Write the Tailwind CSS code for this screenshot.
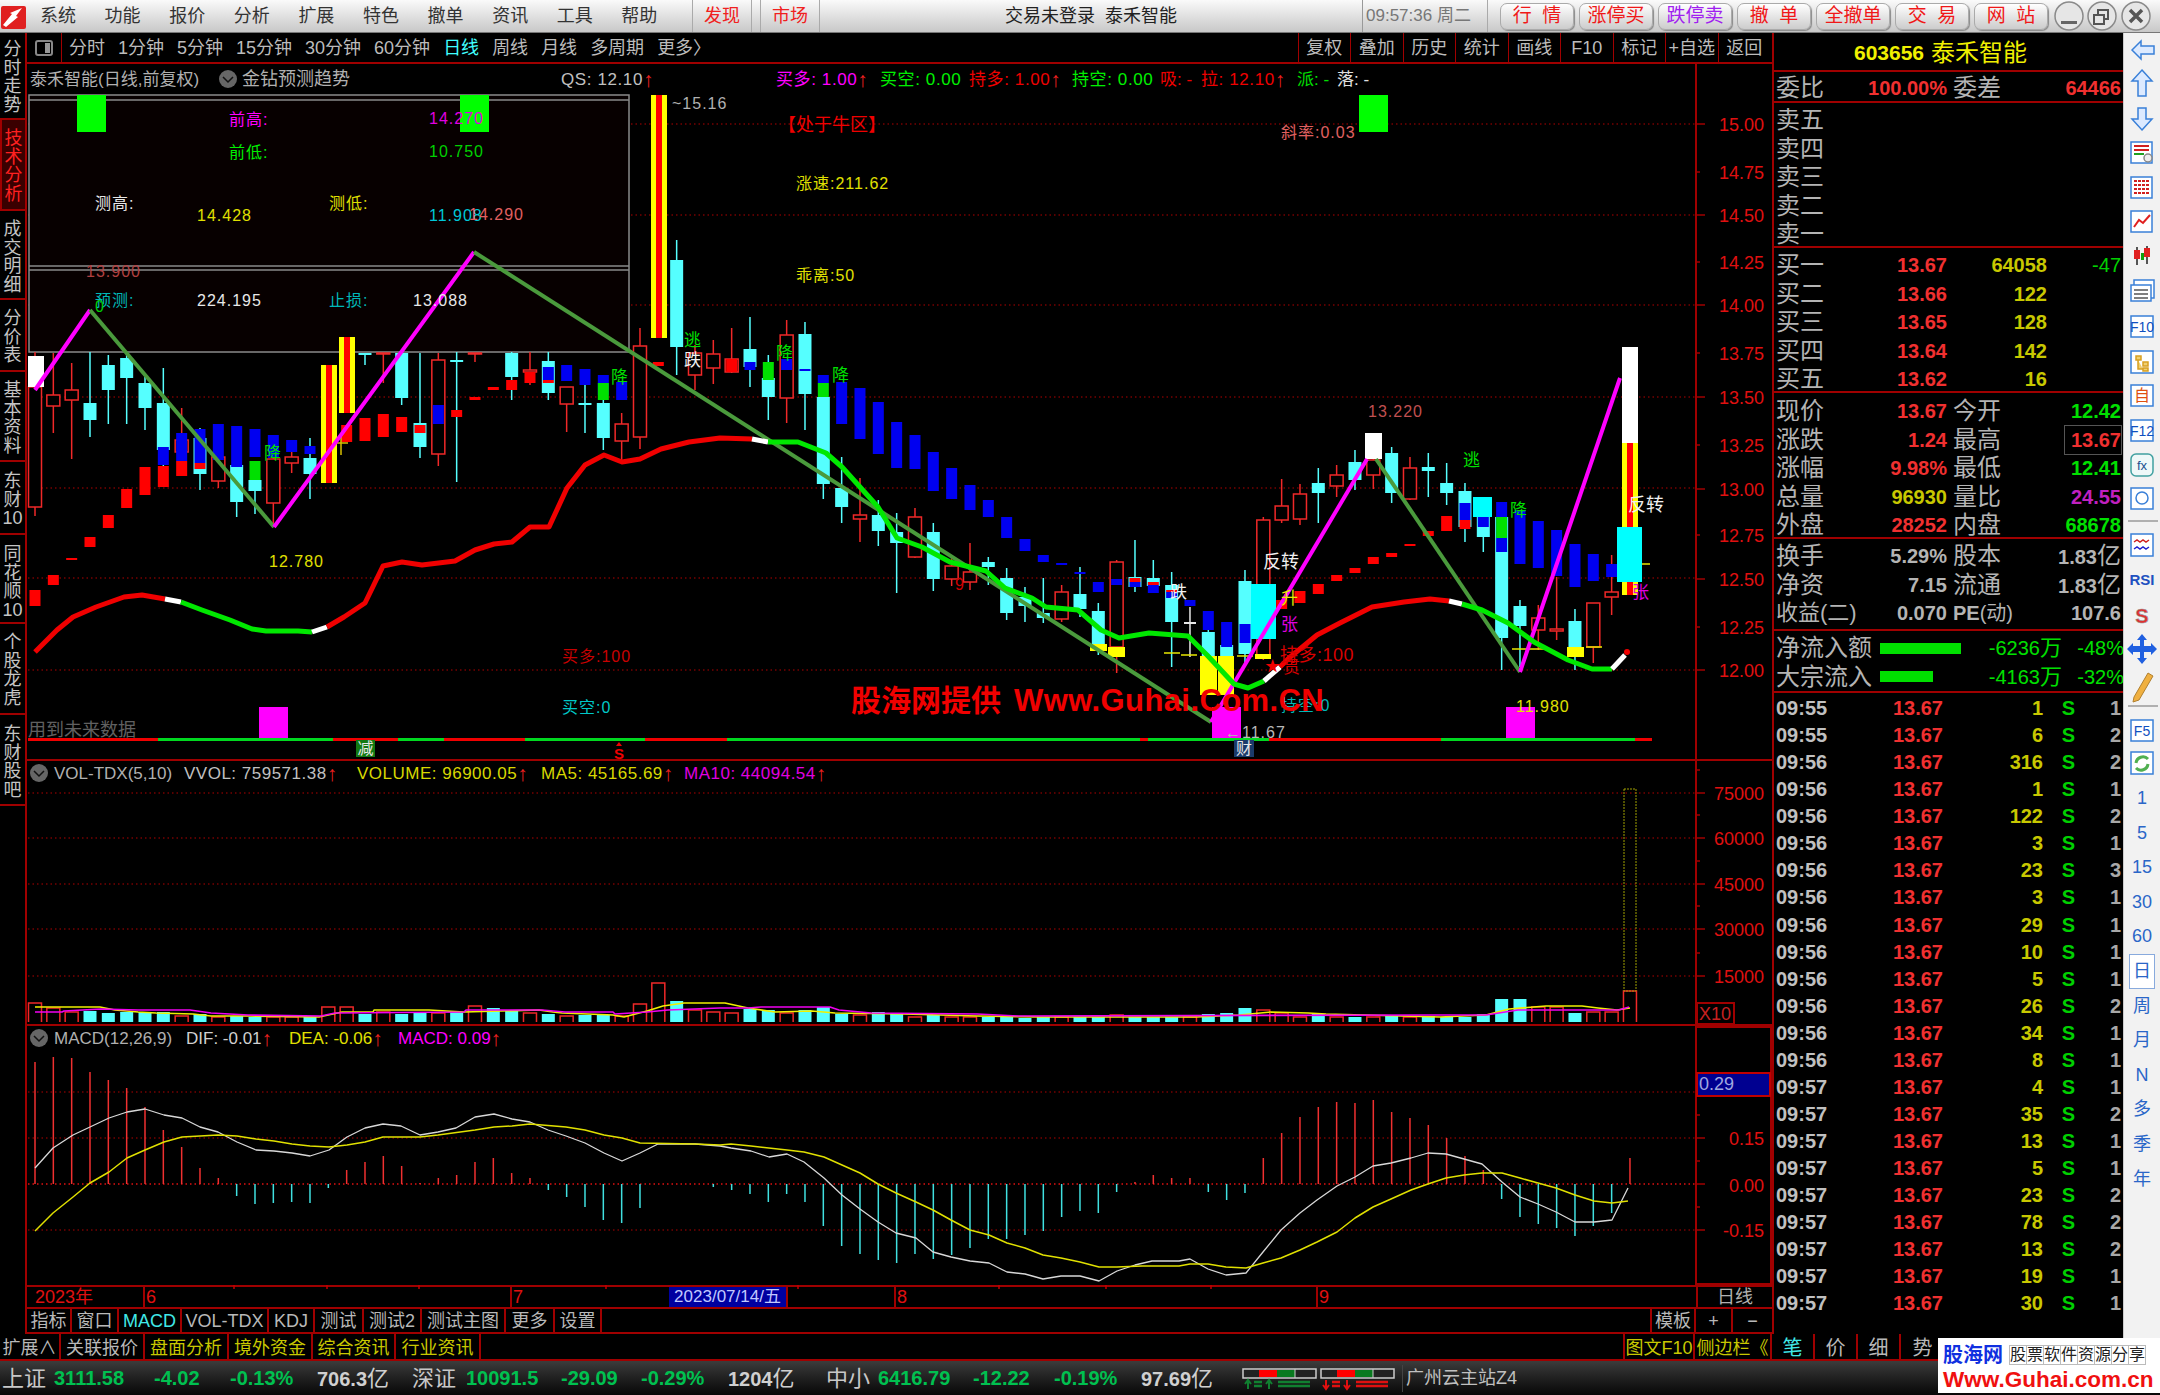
<!DOCTYPE html>
<html lang="zh"><head><meta charset="utf-8"><title>泰禾智能</title>
<script src="https://cdn.jsdelivr.net/npm/@tailwindcss/browser@4"></script></head>
<body class="relative w-[2160px] h-[1395px] overflow-hidden bg-black text-[#c0c0c0] font-['Liberation_Sans','Noto_Sans_CJK_SC',sans-serif] flex flex-col">

<!-- title bar -->
<header class="h-[33px] shrink-0 flex items-center bg-linear-to-b from-[#fafafa] to-[#c8c8c8] border-b border-[#777] text-[18px] text-[#333]">
  <svg class="w-[27px] h-[27px] shrink-0" viewBox="0 0 27 27"><rect x="1" y="3" width="25" height="23" rx="2" fill="#e02020"/><path d="M3 22 L12 11 L10 10 L22 5 L16 13 L18 14 L6 24Z" fill="#fff"/></svg>
  <nav class="w-[666px] pl-[13px] flex gap-[28.6px] border-r border-[#aaa] h-full items-center shrink-0"><span>系统</span><span>功能</span><span>报价</span><span>分析</span><span>扩展</span><span>特色</span><span>撤单</span><span>资讯</span><span>工具</span><span>帮助</span></nav>
  <div class="w-[59px] h-full flex items-center justify-center border-r border-[#aaa] text-[#f02020] shrink-0">发现</div>
  <div class="w-[9px] h-full border-r border-[#aaa] shrink-0"></div>
  <div class="w-[59px] h-full flex items-center justify-center border-r border-[#aaa] text-[#f02020] shrink-0">市场</div>
  <div class="w-[543px] h-full flex items-center justify-center border-r border-[#999] text-[#222] shrink-0">交易未登录&nbsp;&nbsp;泰禾智能</div>
  <div class="w-[125px] h-full flex items-center pl-[3px] text-[#777] text-[17px] border-r border-[#aaa] shrink-0">09:57:36 周二</div>
  <div class="pl-[12px] flex gap-[5px] shrink-0 text-[#f01818] text-[19px]">
    <span class="w-[74px] h-[27px] rounded-[7px] border border-[#aaa] shadow-[1px_1px_1px_#888] bg-linear-to-b from-white to-[#ccc] flex items-center justify-center">行&nbsp;&nbsp;情</span>
    <span class="w-[74px] h-[27px] rounded-[7px] border border-[#aaa] shadow-[1px_1px_1px_#888] bg-linear-to-b from-white to-[#ccc] flex items-center justify-center">涨停买</span>
    <span class="w-[74px] h-[27px] rounded-[7px] border border-[#aaa] shadow-[1px_1px_1px_#888] bg-linear-to-b from-white to-[#ccc] flex items-center justify-center text-[#a020f0]">跌停卖</span>
    <span class="w-[74px] h-[27px] rounded-[7px] border border-[#aaa] shadow-[1px_1px_1px_#888] bg-linear-to-b from-white to-[#ccc] flex items-center justify-center">撤&nbsp;&nbsp;单</span>
    <span class="w-[74px] h-[27px] rounded-[7px] border border-[#aaa] shadow-[1px_1px_1px_#888] bg-linear-to-b from-white to-[#ccc] flex items-center justify-center">全撤单</span>
    <span class="w-[74px] h-[27px] rounded-[7px] border border-[#aaa] shadow-[1px_1px_1px_#888] bg-linear-to-b from-white to-[#ccc] flex items-center justify-center">交&nbsp;&nbsp;易</span>
    <span class="w-[74px] h-[27px] rounded-[7px] border border-[#aaa] shadow-[1px_1px_1px_#888] bg-linear-to-b from-white to-[#ccc] flex items-center justify-center">网&nbsp;&nbsp;站</span>
  </div>
  <svg class="ml-[4px] w-[104px] h-[32px] shrink-0" viewBox="0 0 104 32">
    <g fill="#e6e6e6" stroke="#8a8a8a" stroke-width="1.5"><circle cx="17" cy="16" r="14"/><circle cx="50" cy="16" r="14"/><circle cx="84" cy="16" r="14"/></g>
    <rect x="9" y="21" width="16" height="3" fill="#666"/>
    <g fill="none" stroke="#555" stroke-width="2"><rect x="46" y="10" width="10" height="9"/><rect x="42" y="15" width="10" height="9" fill="#e6e6e6"/></g>
    <path d="M78 10 L90 22 M90 10 L78 22" stroke="#555" stroke-width="3.5"/>
  </svg>
</header>

<div class="flex h-[1328px] shrink-0">
  <div class="w-[2123px] flex flex-col shrink-0">
    <div class="flex h-[1301px]">
      <!-- left vertical tabs -->
      <aside class="w-[27px] shrink-0 border-r-2 border-[#a00000] flex flex-col text-[18px] leading-[18.5px] text-center text-[#c4c4c4]">
        <div class="h-[87px] border-b-2 border-[#a00000] pt-[7px] break-all">分时走势</div>
        <div class="h-[91px] border-b-2 border-[#a00000] pt-[9px] break-all bg-[#3a0000] text-[#ff2020] border-l-2">技术分析</div>
        <div class="h-[89px] border-b-2 border-[#a00000] pt-[9px] break-all">成交明细</div>
        <div class="h-[72px] border-b-2 border-[#a00000] pt-[9px] break-all">分价表</div>
        <div class="h-[90px] border-b-2 border-[#a00000] pt-[9px] break-all">基本资料</div>
        <div class="h-[73px] border-b-2 border-[#a00000] pt-[10px] break-all">东财10</div>
        <div class="h-[89px] border-b-2 border-[#a00000] pt-[10px] break-all">同花顺10</div>
        <div class="h-[91px] border-b-2 border-[#a00000] pt-[9px] break-all">个股龙虎</div>
        <div class="h-[91px] border-b-2 border-[#a00000] pt-[10px] break-all">东财股吧</div>
        <div class="flex-1"></div>
      </aside>

      <!-- centre -->
      <main class="w-[1745px] shrink-0 flex flex-col">
        <div class="h-[31px] shrink-0 flex items-center border-b-2 border-[#a00000] text-[18px] text-[#bcbcbc]">
          <div class="w-[35px] h-full border-r border-[#a00000] flex items-center justify-center shrink-0"><svg class="w-[18px] h-[16px]" viewBox="0 0 18 16"><rect x="1" y="1" width="16" height="14" rx="2" fill="none" stroke="#888" stroke-width="2"/><rect x="10" y="3" width="5" height="10" fill="#999"/></svg></div>
          <div class="pl-[7px] pt-[2px] flex gap-[13px] shrink-0 whitespace-nowrap"><span>分时</span><span>1分钟</span><span>5分钟</span><span>15分钟</span><span>30分钟</span><span>60分钟</span><span class="text-[#40ffff]">日线</span><span>周线</span><span>月线</span><span>多周期</span><span>更多〉</span></div>
          <div class="ml-auto pr-[2px] flex h-full shrink-0 whitespace-nowrap">
            <span class="w-[52.5px] pt-[2px] flex items-center justify-center border-l border-[#a00000]">复权</span><span class="w-[52.5px] pt-[2px] flex items-center justify-center border-l border-[#a00000]">叠加</span><span class="w-[52.5px] pt-[2px] flex items-center justify-center border-l border-[#a00000]">历史</span><span class="w-[52.5px] pt-[2px] flex items-center justify-center border-l border-[#a00000]">统计</span><span class="w-[52.5px] pt-[2px] flex items-center justify-center border-l border-[#a00000]">画线</span><span class="w-[52.5px] pt-[2px] flex items-center justify-center border-l border-[#a00000]">F10</span><span class="w-[52.5px] pt-[2px] flex items-center justify-center border-l border-[#a00000]">标记</span><span class="w-[52.5px] pt-[2px] flex items-center justify-center border-l border-[#a00000]">+自选</span><span class="w-[52.5px] pt-[2px] flex items-center justify-center border-l border-[#a00000]">返回</span>
          </div>
        </div>

        <div class="h-[1221px] shrink-0 relative">
          <svg class="absolute inset-0 w-[1745px] h-[1221px] overflow-visible" viewBox="27 64 1745 1221">
            <g id="chart"></g>
            <!-- pane headers -->
            <g font-size="17" dominant-baseline="central">
              <text x="30" y="79" fill="#b0b0b0">泰禾智能(日线,前复权)</text>
              <circle cx="228" cy="79" r="9" fill="#666"/><path d="M223 77 L228 82 L233 77" stroke="#111" stroke-width="1.5" fill="none"/>
              <text x="242" y="79" fill="#b0b0b0" font-size="18">金钻预测趋势</text>
              <text x="561" y="79" fill="#c0c0c0" letter-spacing="0.6">QS: 12.10<tspan fill="#f02020" font-size="21">↑</tspan></text>
              <text x="776" y="79" fill="#ff00ff" letter-spacing="0.6">买多: 1.00<tspan fill="#f02020" font-size="21">↑</tspan></text>
              <text x="880" y="79" fill="#00f000" letter-spacing="0.6">买空: 0.00</text>
              <text x="969" y="79" fill="#f00000" letter-spacing="0.6">持多: 1.00<tspan fill="#f02020" font-size="21">↑</tspan></text>
              <text x="1072" y="79" fill="#00f000" letter-spacing="0.6">持空: 0.00</text>
              <text x="1160" y="79" fill="#f00000">吸: -</text>
              <text x="1201" y="79" fill="#f00000" letter-spacing="0.6">拉: 12.10<tspan fill="#f02020" font-size="21">↑</tspan></text>
              <text x="1297" y="79" fill="#00e000">派: -</text>
              <text x="1337" y="79" fill="#e0e0e0">落: -</text>
              <circle cx="39" cy="773" r="9" fill="#666"/><path d="M34 771 L39 776 L44 771" stroke="#111" stroke-width="1.5" fill="none"/>
              <text x="54" y="773" fill="#b0b0b0">VOL-TDX(5,10)</text>
              <text x="184" y="773" fill="#c0c0c0" letter-spacing="0.5">VVOL: 759571.38<tspan fill="#f02020" font-size="21">↑</tspan></text>
              <text x="357" y="773" fill="#d8d800" letter-spacing="0.5">VOLUME: 96900.05<tspan fill="#f02020" font-size="21">↑</tspan></text>
              <text x="541" y="773" fill="#d8d800" letter-spacing="0.5">MA5: 45165.69<tspan fill="#f02020" font-size="21">↑</tspan></text>
              <text x="684" y="773" fill="#e000e0" letter-spacing="0.5">MA10: 44094.54<tspan fill="#f02020" font-size="21">↑</tspan></text>
              <circle cx="39" cy="1038" r="9" fill="#666"/><path d="M34 1036 L39 1041 L44 1036" stroke="#111" stroke-width="1.5" fill="none"/>
              <text x="54" y="1038" fill="#b0b0b0">MACD(12,26,9)</text>
              <text x="186" y="1038" fill="#d0d0d0">DIF: -0.01<tspan fill="#f02020" font-size="21">↑</tspan></text>
              <text x="289" y="1038" fill="#e0e000">DEA: -0.06<tspan fill="#f02020" font-size="21">↑</tspan></text>
              <text x="398" y="1038" fill="#ff00ff">MACD: 0.09<tspan fill="#f02020" font-size="21">↑</tspan></text>
            </g>
            <!-- info box -->
            <g font-size="16" dominant-baseline="central" letter-spacing="1">
              <text x="229" y="119" fill="#ff00ff">前高:</text><text x="429" y="118" fill="#e000e0">14.270</text>
              <text x="229" y="152" fill="#00f000">前低:</text><text x="429" y="151" fill="#00d000">10.750</text>
              <text x="95" y="203" fill="#e8e8e8">测高:</text><text x="197" y="215" fill="#e0e000">14.428</text>
              <text x="329" y="203" fill="#e0e000">测低:</text><text x="429" y="215" fill="#00c8d8">11.908</text><text x="469" y="214" fill="#e06060">14.290</text>
              <text x="86" y="271" fill="#b04040">13.900</text>
              <text x="95" y="300" fill="#00b8b8">预测:</text><text x="197" y="300" fill="#e8e8e8">224.195</text>
              <text x="329" y="300" fill="#00b8b8">止损:</text><text x="413" y="300" fill="#e8e8e8">13.088</text>
            </g>
            <!-- chart marks -->
            <g font-size="16" dominant-baseline="central" letter-spacing="1">
              <text x="672" y="103" fill="#b0b0b0">~15.16</text>
              <text x="778" y="125" fill="#f00000" letter-spacing="0" font-size="18">【处于牛区】</text>
              <text x="796" y="183" fill="#e0e000">涨速:211.62</text>
              <text x="796" y="275" fill="#e0e000">乖离:50</text>
              <text x="1281" y="132" fill="#e06060">斜率:0.03</text>
              <text x="1368" y="411" fill="#c05050">13.220</text>
              <text x="269" y="561" fill="#e0e000">12.780</text>
              <text x="562" y="656" fill="#c80000">买多:100</text>
              <text x="562" y="707" fill="#00c8c8">买空:0</text>
              <text x="28" y="730" fill="#606060" letter-spacing="0" font-size="18">用到未来数据</text>
              <text x="1281" y="705" fill="#00b8b8">持空:0</text>
              <text x="1225" y="732" fill="#b8b8b8">←11.67</text>
              <text x="1516" y="706" fill="#e0e000">11.980</text>
              <text x="955" y="584" fill="#d00000">9</text>
              <text x="95" y="306" fill="#00d000">0</text>
              <text x="1463" y="460" fill="#00e000" font-size="17">逃</text><text x="684" y="340" fill="#00e000" font-size="17">逃</text>
              <text x="684" y="360" fill="#f0f0f0" font-size="17">跌</text><text x="1170" y="592" fill="#f0f0f0" font-size="17">跌</text>
              <text x="264" y="453" fill="#00e000" font-size="17">降</text><text x="611" y="377" fill="#00e000" font-size="17">降</text><text x="776" y="353" fill="#00e000" font-size="17">降</text><text x="832" y="375" fill="#00e000" font-size="17">降</text><text x="1510" y="510" fill="#00e000" font-size="17">降</text>
              <text x="1263" y="562" fill="#f0f0f0" font-size="18" letter-spacing="0">反转</text><text x="1628" y="505" fill="#f0f0f0" font-size="18" letter-spacing="0">反转</text>
              <text x="1281" y="598" fill="#e8e800" font-size="17">升</text><text x="1281" y="624" fill="#e000e0" font-size="17">张</text><text x="1632" y="592" fill="#e000e0" font-size="17">张</text>
              <text x="1265" y="665" fill="#f00000" letter-spacing="0" font-size="15">★</text>
              <text x="1280" y="655" fill="#d80000" font-size="18" letter-spacing="0.5">持多:100</text>
              <text x="1283" y="667" fill="#d80000" font-size="17">贯</text>
              <text x="851" y="700" fill="#f00000" font-size="30" font-weight="700" letter-spacing="0">股海网提供</text>
              <text x="1014" y="700" fill="#f00000" font-size="31" font-weight="700" letter-spacing="0.4">Www.Guhai.Com.CN</text>
              <rect x="356" y="740" width="19" height="17" fill="#127a12"/><text x="357.500" y="748.500" fill="#e8e8e8" font-size="16" letter-spacing="0">减</text>
              <rect x="1234" y="740" width="20" height="17" fill="#1a3a6a"/><text x="1236" y="748.500" fill="#e8e8e8" font-size="16" letter-spacing="0">财</text>
              <text x="614" y="753" fill="#f00000" font-size="15" font-weight="700">S</text><path d="M619 742 l3 4 h-6z" fill="#f00000"/>
            </g>
            <!-- axes -->
            <g font-size="18" fill="#e01010" text-anchor="end" dominant-baseline="central" transform="translate(0,1)">
              <text x="1764" y="124">15.00</text><text x="1764" y="172">14.75</text><text x="1764" y="215">14.50</text><text x="1764" y="262">14.25</text><text x="1764" y="305">14.00</text><text x="1764" y="353">13.75</text><text x="1764" y="397">13.50</text><text x="1764" y="445">13.25</text><text x="1764" y="489">13.00</text><text x="1764" y="535">12.75</text><text x="1764" y="579">12.50</text><text x="1764" y="627">12.25</text><text x="1764" y="670">12.00</text>
              <text x="1764" y="793">75000</text><text x="1764" y="838">60000</text><text x="1764" y="884">45000</text><text x="1764" y="929">30000</text><text x="1764" y="976">15000</text>
              <text x="1764" y="1138">0.15</text><text x="1764" y="1185">0.00</text><text x="1764" y="1230">-0.15</text>
              <rect x="1697" y="1002" width="37" height="21" fill="#000" stroke="#a00000" stroke-width="2"/>
              <text x="1731" y="1013" fill="#c82020">X10</text>
              <rect x="1697" y="1072" width="73" height="23" fill="#000090" stroke="#c00000" stroke-width="2"/>
              <text x="1699" y="1083" text-anchor="start" fill="#a0a8e0">0.29</text>
            </g>
          </svg>
        </div>

        <div class="h-[24px] shrink-0 flex border-y-2 border-[#a00000] text-[18px] leading-[20px] text-[#e01010]">
          <span class="w-[116px] pl-[8px] shrink-0">2023年</span>
          <span class="w-[367px] pl-[1px] border-l-2 border-[#a00000] shrink-0">6</span>
          <span class="w-[159px] pl-[1px] border-l-2 border-[#a00000] shrink-0">7</span>
          <span class="w-[117px] bg-[#0000a0] text-[#c0c8ff] text-[17px] text-center whitespace-nowrap shrink-0">2023/07/14/五</span>
          <span class="w-[108px] border-l-2 border-[#a00000] shrink-0"></span>
          <span class="w-[422px] pl-[1px] border-l-2 border-[#a00000] shrink-0">8</span>
          <span class="w-[380px] pl-[1px] border-l-2 border-[#a00000] shrink-0">9</span>
          <span class="flex-1 border-l-2 border-[#a00000] text-[#b0b0b0] text-center">日线</span>
        </div>
        <div class="h-[25px] shrink-0 flex items-stretch border-b-2 border-[#a00000] text-[18px] leading-[25px] text-[#b8b8b8] text-center">
          <span class="w-[45px] border-r-2 border-[#a00000]">指标</span><span class="w-[47px] border-r-2 border-[#a00000]">窗口</span><span class="w-[63px] border-r-2 border-[#a00000] text-[#40e8e8]">MACD</span><span class="w-[87px] border-r-2 border-[#a00000]">VOL-TDX</span><span class="w-[46px] border-r-2 border-[#a00000]">KDJ</span><span class="w-[49px] border-r-2 border-[#a00000]">测试</span><span class="w-[58px] border-r-2 border-[#a00000]">测试2</span><span class="w-[84px] border-r-2 border-[#a00000]">测试主图</span><span class="w-[49px] border-r-2 border-[#a00000]">更多</span><span class="w-[47px] border-r-2 border-[#a00000]">设置</span>
          <span class="ml-auto w-[46px] border-x-2 border-[#a00000]">模板</span><span class="w-[37px] border-r-2 border-[#a00000]">+</span><span class="w-[39px]">−</span>
        </div>
      </main>

      <!-- right quote panel -->
      <section class="w-[351px] shrink-0 border-l-2 border-[#a00000] flex flex-col pl-[2px] text-[24px] leading-[28.6px] text-[#b4b4b4]">
        <div class="h-[39px] shrink-0 -ml-[2px] pt-[3px] border-b-2 border-[#a00000] flex items-center justify-center gap-[7px] text-[#f0f000] pr-[16px]"><b class="text-[21px]">603656</b><span>泰禾智能</span></div>
        <div class="h-[31px] shrink-0 -ml-[2px] pl-[2px] pt-[2px] border-b-2 border-[#a00000] grid grid-cols-[50px_121px_66px_108px] items-center">
          <span>委比</span><b class="text-right text-[20px] text-[#f03030]">100.00%</b><span class="pl-[6px]">委差</span><b class="text-right text-[20px] text-[#f03030]">64466</b>
        </div>
        <div class="h-[145px] shrink-0 -ml-[2px] pl-[2px] border-b-2 border-[#a00000] pt-[3px]">卖五<br>卖四<br>卖三<br>卖二<br>卖一</div>
        <div class="h-[145px] shrink-0 -ml-[2px] pl-[2px] border-b-2 border-[#a00000] pt-[3px] flex">
          <div class="w-[50px]">买一<br>买二<br>买三<br>买四<br>买五</div>
          <b class="w-[121px] text-right text-[20px] text-[#f03030]">13.67<br>13.66<br>13.65<br>13.64<br>13.62</b>
          <b class="w-[100px] text-right text-[20px] text-[#c8c800]">64058<br>122<br>128<br>142<br>16</b>
          <span class="w-[74px] text-right text-[20px] text-[#00d000]">-47</span>
        </div>
        <div class="h-[146px] shrink-0 -ml-[2px] pl-[2px] border-b-2 border-[#a00000] pt-[4px] grid grid-cols-[50px_121px_66px_108px] auto-rows-[28.6px]">
          <span>现价</span><b class="text-right text-[20px] text-[#f03030]">13.67</b><span class="pl-[6px]">今开</span><b class="text-right text-[20px] text-[#00e000]">12.42</b>
          <span>涨跌</span><b class="text-right text-[20px] text-[#f03030]">1.24</b><span class="pl-[6px]">最高</span><b class="text-right text-[20px] text-[#f03030] justify-self-end w-[56px] outline outline-[#555]">13.67</b>
          <span>涨幅</span><b class="text-right text-[20px] text-[#f03030]">9.98%</b><span class="pl-[6px]">最低</span><b class="text-right text-[20px] text-[#00e000]">12.41</b>
          <span>总量</span><b class="text-right text-[20px] text-[#c8c800]">96930</b><span class="pl-[6px]">量比</span><b class="text-right text-[20px] text-[#c020c0]">24.55</b>
          <span>外盘</span><b class="text-right text-[20px] text-[#f03030]">28252</b><span class="pl-[6px]">内盘</span><b class="text-right text-[20px] text-[#00e000]">68678</b>
        </div>
        <div class="h-[92px] shrink-0 -ml-[2px] pl-[2px] border-b-2 border-[#a00000] pt-[3px] grid grid-cols-[50px_121px_66px_108px] auto-rows-[28.6px]">
          <span>换手</span><b class="text-right text-[20px] text-[#b4b4b4]">5.29%</b><span class="pl-[6px]">股本</span><b class="text-right text-[20px] text-[#b4b4b4] whitespace-nowrap">1.83<span class="font-normal text-[24px]">亿</span></b>
          <span>净资</span><b class="text-right text-[20px] text-[#b4b4b4]">7.15</b><span class="pl-[6px]">流通</span><b class="text-right text-[20px] text-[#b4b4b4] whitespace-nowrap">1.83<span class="font-normal text-[24px]">亿</span></b>
          <span class="text-[22px] whitespace-nowrap">收益(二)</span><b class="text-right text-[20px] text-[#b4b4b4]">0.070</b><b class="text-[20px] pl-[6px] whitespace-nowrap text-[#b4b4b4]">PE<span class="font-normal">(动)</span></b><b class="text-right text-[20px] text-[#b4b4b4]">107.6</b>
        </div>
        <div class="h-[62px] shrink-0 -ml-[2px] pl-[2px] border-b-2 border-[#a00000] pt-[3px] grid grid-cols-[104px_81px_101px_62px] auto-rows-[28.6px] items-center">
          <span>净流入额</span><span class="h-[11px] bg-[#00e000]"></span><span class="text-right text-[20px] text-[#00e000]">-6236<span class="text-[22px]">万</span></span><span class="text-right text-[20px] text-[#00e000]">-48%</span>
          <span>大宗流入</span><span class="h-[11px] w-[53px] bg-[#00e000]"></span><span class="text-right text-[20px] text-[#00e000]">-4163<span class="text-[22px]">万</span></span><span class="text-right text-[20px] text-[#00e000]">-32%</span>
        </div>
        <div class="flex-1 flex text-[20px] leading-[27.07px] font-bold pt-[2px]">
          <div class="w-[53px] text-[#c0c0c0]">09:55<br>09:55<br>09:56<br>09:56<br>09:56<br>09:56<br>09:56<br>09:56<br>09:56<br>09:56<br>09:56<br>09:56<br>09:56<br>09:56<br>09:57<br>09:57<br>09:57<br>09:57<br>09:57<br>09:57<br>09:57<br>09:57<br>09:57</div>
          <div class="w-[114px] text-right text-[#f03030]">13.67<br>13.67<br>13.67<br>13.67<br>13.67<br>13.67<br>13.67<br>13.67<br>13.67<br>13.67<br>13.67<br>13.67<br>13.67<br>13.67<br>13.67<br>13.67<br>13.67<br>13.67<br>13.67<br>13.67<br>13.67<br>13.67<br>13.67</div>
          <div class="w-[100px] text-right text-[#c8c800]">1<br>6<br>316<br>1<br>122<br>3<br>23<br>3<br>29<br>10<br>5<br>26<br>34<br>8<br>4<br>35<br>13<br>5<br>23<br>78<br>13<br>19<br>30</div>
          <div class="w-[32px] text-right text-[#00d000]">S<br>S<br>S<br>S<br>S<br>S<br>S<br>S<br>S<br>S<br>S<br>S<br>S<br>S<br>S<br>S<br>S<br>S<br>S<br>S<br>S<br>S<br>S</div>
          <div class="w-[46px] text-right text-[#a8a8a8]">1<br>2<br>2<br>1<br>2<br>1<br>3<br>1<br>1<br>1<br>1<br>2<br>1<br>1<br>1<br>2<br>1<br>1<br>2<br>2<br>2<br>1<br>1</div>
        </div>
      </section>
    </div>

    <!-- bottom tab row -->
    <div class="h-[27px] shrink-0 flex items-stretch border-b-2 border-[#a00000] text-[18px] leading-[29px] text-center text-[#c8c800]">
      <span class="w-[61px] border-r-2 border-[#a00000] text-[#b8b8b8]">扩展∧</span><span class="w-[84px] border-r-2 border-[#a00000] text-[#b8b8b8]">关联报价</span><span class="w-[84px] border-r-2 border-[#a00000]">盘面分析</span><span class="w-[84px] border-r-2 border-[#a00000]">境外资金</span><span class="w-[83px] border-r-2 border-[#a00000]">综合资讯</span><span class="w-[85px] border-r-2 border-[#a00000]">行业资讯</span>
      <span class="ml-[1142px] w-[72px] border-x-2 border-[#a00000] whitespace-nowrap">图文F10</span><span class="w-[77px] border-r-2 border-[#a00000] whitespace-nowrap">侧边栏《</span>
      <span class="w-[43px] border-r-2 border-[#a00000] text-[#40e8e8] text-[20px]">笔</span><span class="w-[43px] border-r-2 border-[#a00000] text-[#b8b8b8] text-[20px]">价</span><span class="w-[43px] border-r-2 border-[#a00000] text-[#b8b8b8] text-[20px]">细</span><span class="w-[43px] text-[#b8b8b8] text-[20px]">势</span>
    </div>
  </div>

  <!-- right icon strip -->
  <aside class="w-[37px] shrink-0 bg-[#f2f2f2] border-l border-[#ccc] flex flex-col text-[#2a66c8] text-[18px] text-center">
    <svg class="w-[37px] h-[748px] shrink-0" viewBox="0 33 37 748" fill="none" stroke="#3a80d8" stroke-width="1.5">
      <path d="M8 50 L17 41 V46 H30 V54 H17 V59Z" fill="#dceaff"/>
      <path d="M18 70 L28 81 H22 V96 H14 V81 H8Z" fill="#dceaff"/>
      <path d="M18 130 L28 119 H22 V108 H14 V119 H8Z" fill="#dceaff"/>
      <rect x="7" y="142" width="21" height="21" fill="#fff"/><path d="M10 146h15M10 150h15" stroke="#d02020" stroke-width="2"/><path d="M10 154h10" stroke="#20a020" stroke-width="2"/><circle cx="24" cy="158" r="4" stroke="#888" fill="#eee"/>
      <rect x="7" y="177" width="21" height="21" fill="#fff"/><path d="M10 181h15M10 185h15M10 189h15M10 193h15" stroke="#d02020" stroke-width="2" stroke-dasharray="3 1"/>
      <rect x="7" y="211" width="21" height="21" fill="#fff"/><path d="M10 227 L15 220 L19 223 L26 215" stroke="#e02020" stroke-width="2"/>
      <path d="M13 247v18M23 246v18" stroke="#222"/><rect x="10" y="250" width="6" height="9" fill="#e02020" stroke="none"/><rect x="20" y="248" width="6" height="9" fill="#e02020" stroke="none"/><rect x="17" y="253" width="3" height="7" fill="#10a010" stroke="none"/>
      <rect x="10" y="280" width="20" height="18" fill="#fff"/><rect x="7" y="285" width="20" height="16" fill="#fff"/><path d="M10 290h14M10 294h14M10 298h14" stroke="#555"/>
      <rect x="7" y="316" width="22" height="21" fill="#fff"/><text x="18" y="332" font-size="14" fill="#1050c0" stroke="none" text-anchor="middle">F10</text>
      <rect x="7" y="351" width="22" height="22" fill="#fff"/><path d="M12 356h5v4h-5zM19 362h5v4h-5zM19 368h5v3h-5zM14 360v9h5" stroke="#d8a020" fill="#f0d070"/>
      <rect x="7" y="385" width="22" height="21" fill="#fff"/><text x="18" y="401" font-size="16" fill="#e05010" stroke="none" text-anchor="middle">自</text>
      <rect x="7" y="420" width="22" height="21" fill="#fff"/><text x="18" y="436" font-size="14" fill="#1050c0" stroke="none" text-anchor="middle">F12</text>
      <rect x="7" y="454" width="22" height="22" rx="5" fill="#eef8f8" stroke="#40a0a0"/><text x="18" y="470" font-size="13" fill="#205090" stroke="none" text-anchor="middle">fx</text>
      <rect x="7" y="488" width="22" height="21" fill="#fff"/><circle cx="18" cy="498" r="6"/>
      <path d="M4 521h30" stroke="#b0b0b0" stroke-width="2"/>
      <rect x="7" y="534" width="22" height="22" fill="#fff"/><path d="M10 542l3-2 3 2 3-2 3 2 3-2" stroke="#d02020"/><path d="M10 549l3-2 3 2 3-2 3 2 3-2" stroke="#2020d0"/>
      <text x="18" y="585" font-size="15" font-weight="700" fill="#2050c0" stroke="none" text-anchor="middle">RSI</text>
      <text x="18" y="623" font-size="20" font-weight="700" fill="#e03030" stroke="#999" stroke-width="0.6" text-anchor="middle">S</text>
      <path d="M18 634l5 6h-3v6h7v-3l6 6-6 6v-3h-7v6h3l-5 6-5-6h3v-6H9v3l-6-6 6-6v3h7v-6h-3z" fill="#2060e0" stroke="none"/>
      <path d="M10 697 L24 673 L29 676 L15 700 L9 702Z" fill="#f0b040" stroke="#b08030" stroke-width="1"/>
      <path d="M4 706h30" stroke="#b0b0b0" stroke-width="2"/>
      <rect x="7" y="720" width="22" height="21" fill="#fff"/><text x="18" y="736" font-size="14" fill="#1050c0" stroke="none" text-anchor="middle">F5</text>
      <rect x="7" y="752" width="22" height="22" fill="#fff"/><path d="M12 763a7 7 0 0 1 12-4M24 764a7 7 0 0 1-12 4" stroke="#50b050" stroke-width="3"/>
    </svg>
    <span class="h-[34.6px] shrink-0 leading-[34.6px]">1</span><span class="h-[34.6px] shrink-0 leading-[34.6px]">5</span><span class="h-[34.6px] shrink-0 leading-[34.6px]">15</span><span class="h-[34.6px] shrink-0 leading-[34.6px]">30</span><span class="h-[34.6px] shrink-0 leading-[34.6px]">60</span>
    <span class="h-[34.6px] shrink-0 leading-[32px] mx-[5px] bg-white border border-[#88aadd]">日</span>
    <span class="h-[34.6px] shrink-0 leading-[34.6px]">周</span><span class="h-[34.6px] shrink-0 leading-[34.6px]">月</span><span class="h-[34.6px] shrink-0 leading-[34.6px]">N</span><span class="h-[34.6px] shrink-0 leading-[34.6px]">多</span><span class="h-[34.6px] shrink-0 leading-[34.6px]">季</span><span class="h-[34.6px] shrink-0 leading-[34.6px]">年</span>
  </aside>
</div>

<!-- index status bar -->
<footer class="h-[34px] shrink-0 flex items-center bg-linear-to-b from-[#3c3c3c] to-[#080808] text-[20px] font-bold text-[#00c050] whitespace-nowrap">
  <span class="w-[54px] pl-[2px] text-[22px] font-normal text-[#c8c8c8]">上证</span><span class="w-[100px]">3111.58</span><span class="w-[76px]">-4.02</span><span class="w-[87px]">-0.13%</span><span class="w-[95px] text-[#d0d0d0]">706.3<span class="font-normal text-[22px]">亿</span></span>
  <span class="w-[54px] text-[22px] font-normal text-[#c8c8c8]">深证</span><span class="w-[95px]">10091.5</span><span class="w-[80px]">-29.09</span><span class="w-[87px]">-0.29%</span><span class="w-[98px] text-[#d0d0d0]">1204<span class="font-normal text-[22px]">亿</span></span>
  <span class="w-[52px] text-[22px] font-normal text-[#c8c8c8]">中小</span><span class="w-[95px]">6416.79</span><span class="w-[81px]">-12.22</span><span class="w-[87px]">-0.19%</span><span class="w-[101px] text-[#d0d0d0]">97.69<span class="font-normal text-[22px]">亿</span></span>
  <svg class="w-[154px] h-[26px] shrink-0" viewBox="0 0 154 26">
    <rect x="1" y="4" width="73" height="9" fill="#222" stroke="#ccc" stroke-width="1.5"/><rect x="17" y="5" width="18" height="7" fill="#f00"/><rect x="35" y="5" width="18" height="7" fill="#0a7a20"/><path d="M53 4v9" stroke="#ccc"/>
    <rect x="79" y="4" width="73" height="9" fill="#222" stroke="#ccc" stroke-width="1.5"/><rect x="95" y="5" width="18" height="7" fill="#f00"/><rect x="113" y="5" width="18" height="7" fill="#0a7a20"/><path d="M131 4v9" stroke="#ccc"/>
    <path d="M6 15v9M3 19l3-4 3 4M27 15v9M24 19l3-4 3 4" stroke="#108030" stroke-width="2" fill="none"/><path d="M12 17h8M12 21h8M36 17h32M36 21h32" stroke="#108030" stroke-width="2.500"/>
    <path d="M84 15v9M81 20l3 4 3-4M105 15v9M102 20l3 4 3-4" stroke="#e01010" stroke-width="2" fill="none"/><path d="M90 17h8M90 21h8M114 17h32M114 21h32" stroke="#e01010" stroke-width="2.500"/>
  </svg>
  <span class="ml-[6px] pl-[3px] text-[18px] font-normal text-[#c0c0c0] border-l border-[#444]">广州云主站Z4</span>
</footer>

<!-- watermark (sits over the corner) -->
<div class="absolute left-[1938px] top-[1338px] w-[222px] h-[55px] bg-white pl-[5px] pt-[5px]">
  <div class="flex items-center gap-[7px] h-[24px]"><b class="text-[20px] leading-[24px] text-[#1030e0]">股海网</b>
    <div class="flex text-[16px] leading-[18px] text-[#222]"><span class="w-[18px] text-center border border-[#bbb] -ml-px">股</span><span class="w-[18px] text-center border border-[#bbb] -ml-px">票</span><span class="w-[18px] text-center border border-[#bbb] -ml-px">软</span><span class="w-[18px] text-center border border-[#bbb] -ml-px">件</span><span class="w-[18px] text-center border border-[#bbb] -ml-px">资</span><span class="w-[18px] text-center border border-[#bbb] -ml-px">源</span><span class="w-[18px] text-center border border-[#bbb] -ml-px">分</span><span class="w-[18px] text-center border border-[#bbb] -ml-px">享</span></div>
  </div>
  <b class="block text-[22.5px] leading-[26px] text-[#f01010] whitespace-nowrap">Www.Guhai.com.cn</b>
</div>

<script>
const X=i=>35+18.333*i, RED='#f02828', CY='#55ffff', BLU='#0000f0', DK='#a00000';
let s='';
const rect=(x,y,w,h,f,extra='')=>{s+=`<rect x="${x}" y="${y}" width="${w}" height="${h}" fill="${f}" ${extra}/>`};
const line=(a,b,c,d,col,w=1.5,extra='')=>{s+=`<line x1="${a}" y1="${b}" x2="${c}" y2="${d}" stroke="${col}" stroke-width="${w}" ${extra}/>`};
const poly=(p,col,w)=>{s+=`<polyline points="${p}" fill="none" stroke="${col}" stroke-width="${w}" stroke-linejoin="round"/>`};
const dash='stroke-dasharray="1.500 3"';
[124,215,305,397,488,578,670,793,838,884,929,976,1092,1138,1230].forEach(y=>line(28,y,1696,y,'#b00000',1.2,dash));
line(28,1184,1696,1184,'#e01010',1.4,dash);
line(1696,64,1696,1285,DK,2);
line(27,760,1772,760,DK,2); line(27,1025,1772,1025,DK,2);
s+=`<rect x="1696" y="1027" width="75" height="257" fill="none" stroke="${DK}" stroke-width="2"/>`;
[[124,172,215,262,305,353,397,445,489,535,579,627,670],[793,838,884,929,976],[1138,1184,1230]].forEach(a=>a.forEach((y,k)=>{
  const major=(a.length==13?k%2==0:true); line(1696,y,major?1705:1700,y,DK,1.5);
  if(a.length!=13){line(1696,y-23,1700,y-23,DK,1.5)}
}));
rect(29,95,600,257,'#070000','stroke="#8a8a8a" stroke-width="1.500"');
[100,266,270].forEach(y=>line(29,y,629,y,'#8a8a8a',1.5));
[234,327,419,606,798,999,1106,1211].forEach(x=>line(x,1285,x,1289,'#c00000',1.5));
const C=[[0,'r',352,387,507,516],[1,'r',353,395,406,433],[2,'r',363,390,400,459],[3,'c',352,403,420,437],[4,'c',355,365,390,424],[5,'c',352,358,378,424],[6,'c',377,383,408,430],[7,'c',368,403,450,470],[8,'r',408,440,452,460],[9,'c',428,438,474,490],[10,'r',445,457,481,488],[11,'c',440,465,502,517],[12,'c',465,480,491,514],[13,'r',445,459,503,527],[14,'r',452,457,463,473],[15,'c',438,458,474,499],
[18,'c',353,353,355,365],[19,'r',353,353,354,383],[20,'c',353,353,398,405],[21,'c',353,423,447,458],[22,'r',353,360,454,466],[23,'c',352,360,362,482],[24,'r',353,353,354,362],[26,'c',352,353,377,400],[27,'r',352,370,372,385],[28,'c',352,361,393,400],[29,'r',387,387,404,432],[30,'c',385,403,405,433],[31,'c',385,403,438,450],[32,'r',413,424,441,463],[33,'r',328,346,437,449],
[35,'c',240,260,347,375],[36,'r',345,353,375,390],[37,'r',340,354,368,384],[38,'r',328,359,372,373],[39,'c',317,349,367,387],[40,'c',355,378,397,420],[41,'r',320,335,398,423],[42,'c',322,334,394,430],[43,'c',385,397,484,499],[44,'c',457,488,507,523],[45,'r',478,515,519,542],[46,'c',500,515,531,546],[47,'c',513,532,543,593],[48,'r',508,517,557,558],[49,'c',523,532,579,591],[50,'r',556,566,579,586],[51,'r',543,572,582,590],[52,'c',557,562,567,585],[53,'c',568,578,613,620],[54,'c',587,597,606,622],[55,'c',578,613,618,623],[56,'r',585,592,619,622],[57,'c',567,594,609,617],[58,'c',603,611,645,655],[59,'r',560,562,647,673],[60,'c',540,577,587,592],[61,'c',560,578,586,593],[62,'c',572,585,622,667],[64,'c',625,632,657,665],[65,'c',640,645,660,665],[66,'c',570,581,654,665],[67,'r',517,520,655,660],[68,'r',479,506,520,523],[69,'r',484,494,519,525],[70,'c',468,483,493,523],[71,'r',465,475,486,497],[72,'c',450,462,480,490],[73,'r',447,460,475,489],[74,'c',447,453,493,503],[75,'r',457,468,499,500],[76,'c',453,467,471,497],[77,'c',463,483,493,505],[78,'c',483,491,527,542],[79,'c',510,517,537,552],[80,'c',502,517,638,670],[81,'c',600,606,626,667],[82,'r',605,618,630,650],[83,'r',577,629,631,640],[84,'c',609,621,650,670],[85,'r',603,603,647,663],[86,'r',555,592,597,615]];
C.forEach(([i,t,wt,bt,bb,wb])=>{const x=X(i),col=t=='r'?RED:CY;line(x,wt,x,wb,col,1.5);
  if(t=='r')s+=`<rect x="${x-6.5}" y="${bt}" width="13" height="${Math.max(bb-bt,1)}" fill="#000" stroke="${RED}" stroke-width="1.500"/>`;else rect(x-6.5,bt,13,Math.max(bb-bt,2),CY)});
line(X(63),607,X(63),657,'#e8e8e8',1.5);line(X(63)-6,623,X(63)+6,623,'#e8e8e8',2);
[[7,447,465],[8,433,461],[9,429,463],[10,424,460],[11,426,467],[12,429,457],[13,435,458],[14,440,452],[15,446,454],[22,405,424],[28,367,380],[29,365,381],[30,369,385],[31,375,395],[32,382,400],[39,362,370],[41,359,370],[42,369,371],[43,375,383],[44,382,424],[45,388,439],[46,402,454],[47,422,468],[48,435,469],[49,452,491],[50,468,499],[51,485,510],[52,500,517],[53,517,538],[54,539,551],[55,555,562],[56,563,565],[57,572,574],[58,582,592],[59,579,585],[60,582,587],[61,585,593],[62,592,598],[63,600,606],[64,611,630],[65,622,647],[66,624,643],[78,503,520],[79,517,527],[80,502,552],[81,510,564],[82,521,568],[83,530,576],[84,544,587],[85,554,581],[86,564,577]].forEach(([i,a,b])=>rect(X(i)-5.5,a,11,b-a,BLU));
[[0,590,606],[1,575,585],[2,558,560],[3,537,547],[4,515,528],[5,489,508],[6,467,495],[7,466,487],[8,461,476],[9,463,469],[17,425,442],[18,418,441],[19,414,437],[20,417,432],[21,425,433],[23,410,417],[24,397,400],[25,387,390],[26,380,390],[27,372,383],[28,380,383],[34,362,366],[38,359,372],[60,578,582],[61,582,585],[62,590,592],[68,600,609],[69,591,603],[70,584,594],[71,575,581],[72,568,573],[73,557,564],[74,553,557],[75,544,546],[76,531,536],[77,516,531],[78,520,529]].forEach(([i,a,b])=>rect(X(i)-5.5,a,11,b-a,'#ff0000'));
[[12,461,480],[31,383,400],[40,362,380],[43,383,397],[80,517,538]].forEach(([i,a,b])=>rect(X(i)-5.5,a,11,b-a,'#00e000'));
[[321,365,118],[339,337,76],[651,95,243],[1622,443,152]].forEach(([x,y,h])=>{rect(x,y,16,h,'#ffff00');rect(x+5,y,6,h,'#ff0000')});
rect(28,356,16,31,'#fff');rect(1365,433,17,26,'#fff');rect(1622,347,16,96,'#fff');
[[1090,644,17,7],[1108,647,17,10],[1200,656,17,39],[1218,656,16,39],[1255,654,16,5],[1567,647,17,10]].forEach(a=>rect(a[0],a[1],a[2],a[3],'#ffff00'));
[[1164,653],[1181,655],[1237,656],[1512,649],[1529,649],[1586,647],[1634,564]].forEach(([x,y])=>line(x,y,x+16,y,'#e8e800',1.5));
line(334,443,348,443,'#d8c000',1.5);line(341,436,341,455,'#d8c000',1.5);
rect(1251,584,25,55,'#00ffff');rect(1473,497,19,20,'#00ffff');rect(1617,527,25,55,'#00ffff');
[[77,95],[460,95],[1359,95]].forEach(([x,y])=>rect(x,y,29,37,'#00ff00'));
[259,1212,1506].forEach(x=>rect(x,707,29,31,'#ff00ff'));
poly('35,390 90,310','#ff00ff',4);poly('90,310 274,527','#4a9a3c',4);poly('274,527 474,252','#ff00ff',4);poly('474,252 1211,722','#4a9a3c',4);poly('1211,722 1367,459','#ff00ff',4);poly('1376,459 1520,672','#4a9a3c',4);poly('1520,672 1620,378','#ff00ff',4);
[['#f00000','35,652 57,630 73,617 96,607 124,597 142,595 165,599'],['#fff','165,599 181,602'],['#00e800','181,602 202,610 230,620 252,629 266,631 298,631 312,632'],['#fff','312,632 327,627'],['#f00000','327,627 344,617 365,603 383,566 402,562 422,565 455,561 475,550 494,544 512,542 530,527 549,527 567,488 585,465 604,455 622,462 640,459 661,449 689,442 720,438 752,439'],['#fff','752,439 768,442'],['#00e800','768,442 798,442 826,453 842,467 878,507 897,538 922,547 950,562 986,571 1005,588 1032,598 1046,607 1078,610 1101,630 1119,638 1149,633 1188,636 1207,655 1234,684 1248,688 1264,681'],['#fff','1264,681 1280,667'],['#f00000','1280,667 1289,658 1317,635 1340,623 1372,607 1404,602 1430,599 1449,601'],['#fff','1449,601 1462,604'],['#00e800','1462,604 1482,610 1508,623 1534,642 1568,660 1592,669 1612,669'],['#fff','1612,669 1625,655']].forEach(([c,p])=>poly(p,c,5));
s+='<circle cx="1627" cy="652" r="3" fill="#f00000"/>';
[[28,158,'r'],[158,333,'g'],[333,398,'r'],[398,444,'g'],[444,525,'r'],[525,645,'g'],[645,727,'r'],[727,1140,'g'],[1140,1148,'r'],[1148,1269,'g'],[1269,1441,'r'],[1441,1635,'g'],[1635,1652,'r']].forEach(([a,b,t])=>rect(a,738,b-a,3,t=='r'?'#f00000':'#00d820'));
const V=[[1003,'r'],[1008,'r'],[1012,'r'],[1011,'c'],[1013,'c'],[1012,'c'],[1012,'c'],[1012,'c'],[1016,'r'],[1014,'c'],[1017,'r'],[1016,'c'],[1017,'c'],[1017,'r'],[1017,'r'],[1017,'c'],[1007,'r'],[1007,'r'],[1014,'c'],[1012,'r'],[1014,'c'],[1012,'c'],[1013,'r'],[1012,'c'],[1006,'r'],[1008,'c'],[1011,'c'],[1013,'r'],[1014,'c'],[1016,'r'],[1015,'c'],[1015,'c'],[1016,'r'],[1004,'r'],[983,'r'],[1001,'c'],[1010,'r'],[1012,'r'],[1013,'r'],[1009,'c'],[1010,'c'],[1013,'r'],[1010,'c'],[1007,'c'],[1014,'c'],[1015,'r'],[1012,'c'],[1013,'c'],[1017,'r'],[1015,'c'],[1017,'r'],[1017,'r'],[1017,'c'],[1016,'c'],[1018,'c'],[1017,'c'],[1017,'r'],[1017,'c'],[1017,'c'],[1015,'r'],[1017,'c'],[1017,'c'],[1017,'c'],[1017,'r'],[1014,'c'],[1013,'c'],[1008,'c'],[1010,'r'],[1013,'r'],[1017,'r'],[1014,'c'],[1017,'r'],[1017,'c'],[1017,'r'],[1016,'c'],[1017,'r'],[1016,'c'],[1017,'c'],[1017,'c'],[1014,'c'],[999,'c'],[999,'c'],[1007,'r'],[1007,'r'],[1013,'c'],[1012,'r'],[1012,'r'],[991,'r']];
V.forEach(([y,t],i)=>{const x=X(i);if(t=='c')rect(x-6.5,y,13,1022-y,CY);else s+=`<path d="M${x-6.5} 1022V${y}H${x+6.5}V1022" fill="none" stroke="${RED}" stroke-width="1.500"/>`});
s+=`<rect x="1624" y="789" width="12" height="202" fill="none" stroke="#a0a000" stroke-width="1" stroke-dasharray="2 1"/>`;
poly('35,1007 100,1007 115,1010 138,1012 156,1013 193,1014 211,1016 248,1016 319,1017 333,1014 342,1012 373,1012 374,1010 429,1010 464,1012 539,1010 553,1012 562,1013 613,1015 624,1017 647,1011 663,1006 684,1003 725,1003 748,1008 775,1012 812,1011 835,1013 904,1014 977,1016 1041,1017 1110,1017 1197,1017 1239,1015 1271,1012 1308,1013 1326,1014 1440,1017 1486,1015 1509,1009 1546,1006 1582,1006 1598,1008 1617,1010 1630,1008','#f0f000',1.6);
poly('35,1012 62,1012 64,1011 101,1009 138,1010 190,1010 211,1013 248,1015 321,1016 335,1013 464,1012 466,1010 542,1010 565,1012 613,1012 615,1014 647,1012 668,1010 720,1008 748,1008 761,1007 830,1007 839,1010 871,1013 977,1014 1018,1016 1440,1015 1486,1015 1518,1010 1619,1010 1629,1007','#f000f0',1.6);
const M=[1062,1057,1058,1072,1080,1088,1107,1130,1147,1168,1178,1196,1204,1203,1202,1203,1188,1170,1162,1156,1166,1183,1178,1175,1162,1158,1173,1178,1190,1197,1207,1220,1223,1208,0,0,0,1187,1190,1194,1202,1194,1202,1226,1246,1254,1260,1263,1254,1259,1255,1248,1239,1239,1235,1231,1217,1211,1213,1192,1182,1175,1178,1178,1192,1200,1193,1158,1133,1117,1107,1102,1103,1100,1112,1118,1125,1138,1156,1170,1199,1217,1224,1228,1236,1226,1213,1158];
M.forEach((y,i)=>{if(y)line(X(i),1184,X(i),y,y<1184?'#f03030':'#40e0e0',1.5)});
poly('35,1168 53,1148 73,1135 90,1127 109,1118 127,1112 145,1109 164,1115 182,1118 200,1127 218,1132 237,1142 256,1150 274,1151 292,1153 310,1156 329,1150 347,1137 365,1128 383,1124 401,1126 420,1135 438,1132 456,1128 475,1117 494,1114 512,1119 530,1122 548,1130 566,1136 585,1143 604,1153 622,1161 640,1153 658,1144 695,1144 720,1146 731,1148 751,1151 769,1157 787,1154 804,1162 824,1178 842,1195 860,1209 878,1222 896,1233 916,1238 933,1252 951,1257 970,1261 989,1263 1007,1272 1025,1274 1043,1279 1061,1276 1080,1276 1099,1281 1117,1271 1135,1265 1152,1261 1179,1261 1190,1259 1208,1269 1226,1275 1246,1273 1263,1252 1281,1230 1300,1213 1317,1200 1337,1186 1355,1177 1373,1166 1391,1163 1411,1158 1428,1153 1446,1154 1464,1159 1482,1164 1502,1182 1520,1197 1538,1204 1556,1212 1575,1222 1594,1222 1612,1220 1628,1188','#d8d8d8',1.3);
poly('35,1231 53,1213 73,1197 90,1183 109,1172 127,1158 145,1150 164,1142 182,1137 200,1136 218,1135 237,1136 256,1139 274,1141 292,1144 310,1146 329,1147 347,1145 365,1142 383,1137 420,1137 438,1135 475,1130 494,1127 512,1126 530,1124 566,1127 585,1130 604,1135 622,1138 640,1143 695,1144 720,1145 731,1144 751,1146 787,1150 804,1152 824,1157 842,1165 860,1173 878,1184 896,1193 916,1202 933,1210 951,1220 970,1230 989,1235 1007,1243 1025,1248 1043,1255 1061,1258 1080,1262 1099,1267 1117,1267 1142,1266 1179,1266 1190,1264 1208,1264 1226,1267 1246,1268 1263,1263 1281,1258 1300,1250 1317,1242 1337,1232 1355,1218 1373,1207 1391,1199 1411,1190 1428,1184 1446,1178 1464,1175 1482,1173 1502,1173 1520,1178 1538,1183 1556,1188 1575,1195 1594,1201 1612,1203 1628,1201','#e0e000',1.5);
document.getElementById('chart').innerHTML=s;
</script>
</body></html>
